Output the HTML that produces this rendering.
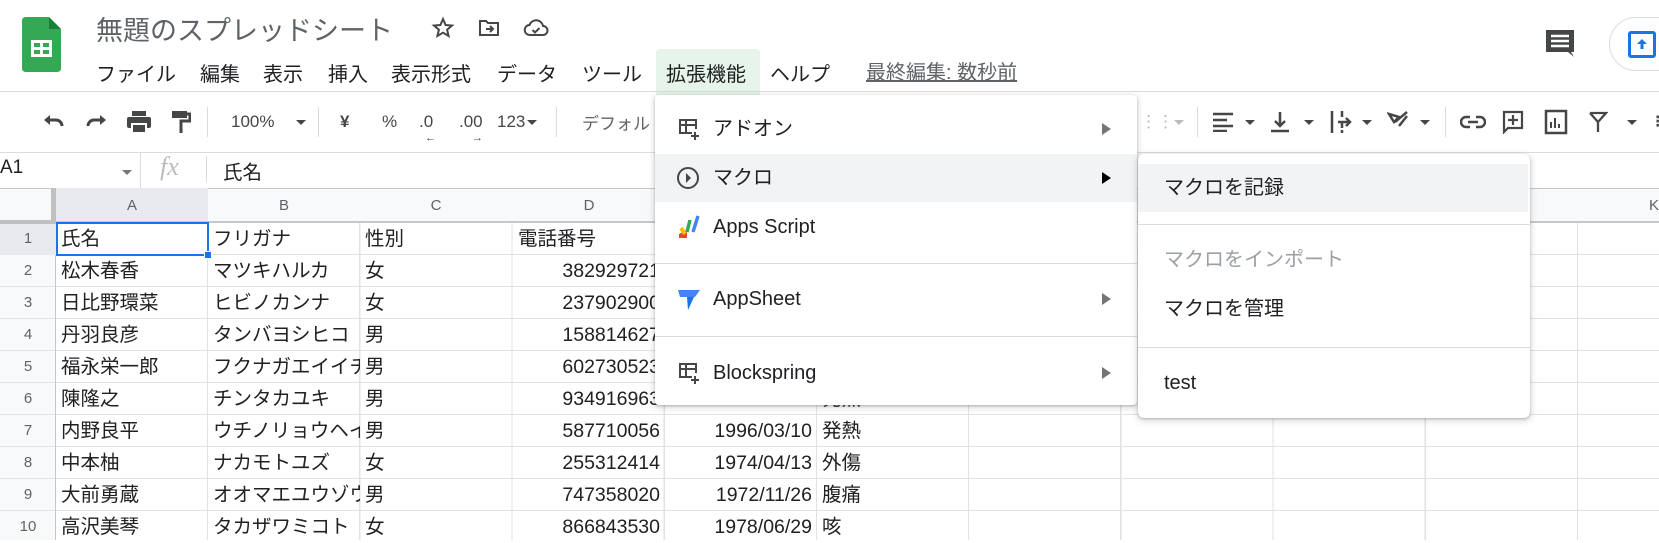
<!DOCTYPE html>
<html><head><meta charset="utf-8">
<style>
*{box-sizing:border-box;margin:0;padding:0}
body{width:1659px;height:540px;overflow:hidden;background:#fff;font-family:"Liberation Sans","Noto Sans CJK JP",sans-serif;color:#202124;position:relative}
.a{position:absolute;white-space:nowrap}
.menu{font-size:20px;color:#202124}
.tb{position:absolute;top:122px;transform:translateY(-50%);color:#444746;font-size:17px}
.cell{position:absolute;height:32px;line-height:32px;font-size:19.5px;overflow:hidden;white-space:nowrap;padding:0 5px}
.rn{position:absolute;left:0;width:56px;height:32px;line-height:32px;text-align:center;font-size:15px;color:#5f6368}
.ch{position:absolute;top:188px;height:35px;line-height:35px;text-align:center;font-size:15px;color:#5f6368;width:152px}
.mi{position:absolute;font-size:20px;color:#202124;line-height:24px}
.arr{position:absolute;width:0;height:0;border-top:6px solid transparent;border-bottom:6px solid transparent;border-left:9px solid #757575}
.dd{display:inline-block;width:0;height:0;border-left:5px solid transparent;border-right:5px solid transparent;border-top:5px solid #444746;vertical-align:middle}
</style></head><body>

<!-- logo -->
<svg class="a" style="left:22px;top:17px" width="39" height="55" viewBox="0 0 39 55">
<path d="M4 0H27L39 12V51Q39 55 35 55H4Q0 55 0 51V4Q0 0 4 0Z" fill="#34a853"/>
<path d="M27 0V12H39Z" fill="#188038"/>
<rect x="9" y="23" width="21" height="17" fill="#fff"/>
<rect x="12" y="26" width="6" height="4" fill="#34a853"/><rect x="21" y="26" width="6" height="4" fill="#34a853"/>
<rect x="12" y="33" width="6" height="4" fill="#34a853"/><rect x="21" y="33" width="6" height="4" fill="#34a853"/>
</svg>
<div class="a" style="left:96px;top:9px;font-size:27px;color:#5f6368">無題のスプレッドシート</div>
<svg class="a" style="left:431px;top:16px" width="24" height="24" viewBox="0 0 24 24"><path d="M12 3l2.6 6 6.4.5-4.9 4.2 1.5 6.3L12 16.7 6.4 20l1.5-6.3L3 9.5l6.4-.5z" fill="none" stroke="#444746" stroke-width="2"/></svg>
<svg class="a" style="left:477px;top:16px" width="24" height="24" viewBox="0 0 24 24"><path d="M3 5h6l2 2h10v12H3z" fill="none" stroke="#444746" stroke-width="2"/><path d="M9 13h6M13 10l3 3-3 3" fill="none" stroke="#444746" stroke-width="2"/></svg>
<svg class="a" style="left:523px;top:16px" width="26" height="24" viewBox="0 0 26 24"><path d="M7 19a5 5 0 0 1-.5-10A7 7 0 0 1 20 10a4.5 4.5 0 0 1 0 9z" fill="none" stroke="#444746" stroke-width="2"/><path d="M9.5 14l2.5 2.5 4.5-4.5" fill="none" stroke="#444746" stroke-width="2"/></svg>

<div class="a" style="left:656px;top:49px;width:104px;height:46px;background:#e6f4ea;border-radius:4px 4px 0 0"></div>
<div class="a menu" style="left:96px;top:58px">ファイル</div>
<div class="a menu" style="left:200px;top:58px">編集</div>
<div class="a menu" style="left:263px;top:58px">表示</div>
<div class="a menu" style="left:328px;top:58px">挿入</div>
<div class="a menu" style="left:391px;top:58px">表示形式</div>
<div class="a menu" style="left:497px;top:58px">データ</div>
<div class="a menu" style="left:582px;top:58px">ツール</div>
<div class="a menu" style="left:666px;top:58px">拡張機能</div>
<div class="a menu" style="left:770px;top:58px">ヘルプ</div>
<div class="a menu" style="left:866px;top:56px;color:#5f6368;text-decoration:underline">最終編集: 数秒前</div>

<svg class="a" style="left:1543px;top:28px" width="34" height="32" viewBox="0 0 34 32"><path d="M3 2h28v22h-3l3 5-6-5H3z" fill="#444746"/><path d="M8 8h18M8 13h18M8 18h18" stroke="#fff" stroke-width="2.5"/></svg>
<div class="a" style="left:1609px;top:17px;width:80px;height:54px;border:1px solid #dadce0;border-radius:27px"></div>
<div class="a" style="left:1628px;top:31px;width:28px;height:27px;border:3px solid #1a73e8;border-radius:3px"></div>
<svg class="a" style="left:1634px;top:36px" width="16" height="16" viewBox="0 0 16 16"><path d="M8 3l5 5H9.5v5h-3V8H3z" fill="#1a73e8"/></svg>

<div class="a" style="left:0;top:91px;width:1659px;height:1px;background:#dadce0"></div>

<!-- toolbar -->
<svg class="a" style="left:42px;top:112px" width="24" height="20" viewBox="0 0 24 20"><path d="M5 8h9a6 6 0 0 1 6 6" fill="none" stroke="#444746" stroke-width="3"/><path d="M2 8l6-5v10z" fill="#444746"/></svg>
<svg class="a" style="left:84px;top:112px" width="24" height="20" viewBox="0 0 24 20"><path d="M19 8h-9a6 6 0 0 0-6 6" fill="none" stroke="#444746" stroke-width="3"/><path d="M22 8l-6-5v10z" fill="#444746"/></svg>
<svg class="a" style="left:126px;top:110px" width="26" height="24" viewBox="0 0 26 24"><rect x="6" y="1" width="14" height="5" fill="#444746"/><rect x="1" y="7" width="24" height="11" rx="2" fill="#444746"/><rect x="6" y="14" width="14" height="9" fill="#444746" stroke="#fff" stroke-width="2"/></svg>
<svg class="a" style="left:171px;top:110px" width="20" height="24" viewBox="0 0 20 24"><rect x="1" y="1" width="15" height="7" fill="#444746"/><path d="M16 4h3v7H10v12" fill="none" stroke="#444746" stroke-width="3"/></svg>
<div class="a" style="left:207px;top:107px;width:1px;height:30px;background:#dadce0"></div>
<div class="tb" style="left:231px">100%</div>
<div class="tb" style="left:296px"><span class="dd"></span></div>
<div class="a" style="left:318px;top:107px;width:1px;height:30px;background:#dadce0"></div>
<div class="tb" style="left:340px;font-weight:bold">¥</div>
<div class="tb" style="left:382px">%</div>
<div class="tb" style="left:419px">.0</div>
<div class="a" style="left:425px;top:132px;font-size:11px;color:#444746">←</div>
<div class="tb" style="left:459px">.00</div>
<div class="a" style="left:472px;top:132px;font-size:11px;color:#444746">→</div>
<div class="tb" style="left:497px">123<span class="dd" style="margin-left:2px"></span></div>
<div class="a" style="left:556px;top:107px;width:1px;height:30px;background:#dadce0"></div>
<div class="tb" style="left:582px;color:#5f6368">デフォルト</div>

<div class="tb" style="left:1140px;color:#bbb">⋮⋮</div>
<div class="tb" style="left:1174px"><span class="dd" style="border-top-color:#bbb"></span></div>
<div class="a" style="left:1197px;top:107px;width:1px;height:30px;background:#dadce0"></div>
<svg class="a" style="left:1212px;top:112px" width="22" height="20" viewBox="0 0 22 20"><path d="M1 2h20M1 8h14M1 14h20M1 19h14" stroke="#444746" stroke-width="2.5"/></svg>
<div class="tb" style="left:1245px"><span class="dd"></span></div>
<svg class="a" style="left:1270px;top:111px" width="20" height="22" viewBox="0 0 20 22"><path d="M10 1v14M5 10l5 5 5-5M1 20h18" fill="none" stroke="#444746" stroke-width="2.5"/></svg>
<div class="tb" style="left:1304px"><span class="dd"></span></div>
<svg class="a" style="left:1330px;top:110px" width="26" height="24" viewBox="0 0 26 24"><path d="M2 1v22M12 1v6M12 12v6M12 20v3M8 12h12M16 8l4 4-4 4" fill="none" stroke="#444746" stroke-width="2.5"/></svg>
<div class="tb" style="left:1362px"><span class="dd"></span></div>
<svg class="a" style="left:1387px;top:110px" width="26" height="24" viewBox="0 0 26 24"><path d="M2 4l10 3-5 5zM8 12l12-10M12 16l8-10" fill="none" stroke="#444746" stroke-width="2.5"/></svg>
<div class="tb" style="left:1420px"><span class="dd"></span></div>
<div class="a" style="left:1445px;top:107px;width:1px;height:30px;background:#dadce0"></div>
<svg class="a" style="left:1460px;top:114px" width="26" height="16" viewBox="0 0 26 16"><path d="M10 3H6a5 5 0 0 0 0 10h4M16 3h4a5 5 0 0 1 0 10h-4M8 8h10" fill="none" stroke="#444746" stroke-width="2.5"/></svg>
<svg class="a" style="left:1502px;top:110px" width="22" height="24" viewBox="0 0 22 24"><path d="M2 2h18v16H6l-4 4z" fill="none" stroke="#444746" stroke-width="2.2"/><path d="M11 5v10M6 10h10" stroke="#444746" stroke-width="2.2"/></svg>
<svg class="a" style="left:1544px;top:109px" width="24" height="26" viewBox="0 0 24 26"><rect x="2" y="2" width="20" height="22" fill="none" stroke="#444746" stroke-width="2.5"/><path d="M7 19v-6M11 19v-10M15 19v-4" stroke="#444746" stroke-width="2"/></svg>
<svg class="a" style="left:1588px;top:110px" width="20" height="24" viewBox="0 0 20 24"><path d="M2 3h16l-8 9v10M2 3l8 9" fill="none" stroke="#444746" stroke-width="2.3"/></svg>
<div class="tb" style="left:1627px"><span class="dd"></span></div>
<div class="tb" style="left:1655px;font-weight:bold">⁝</div>

<div class="a" style="left:0;top:152px;width:1659px;height:1px;background:#dadce0"></div>
<!-- formula bar -->
<div class="a" style="left:0;top:157px;font-size:19px">A1</div>
<div class="a" style="left:122px;top:164px"><span class="dd" style="border-top-color:#777"></span></div>
<div class="a" style="left:140px;top:152px;width:1px;height:36px;background:#dadce0"></div>
<div class="a" style="left:160px;top:152px;font-size:26px;font-style:italic;color:#bbb;font-family:'Liberation Serif',serif">fx</div>
<div class="a" style="left:206px;top:156px;width:1px;height:26px;background:#dadce0"></div>
<div class="a" style="left:223px;top:156px;font-size:19.5px">氏名</div>

<!-- grid -->
<div class="a" style="left:0;top:188px;width:1659px;height:352px;
background:
repeating-linear-gradient(to right,transparent 0,transparent 151px,#e2e2e2 151px,#e2e2e2 152.2px) 56px 0/1603px 100% no-repeat,
repeating-linear-gradient(to bottom,transparent 0,transparent 31px,#e2e2e2 31px,#e2e2e2 32px) 0 35px/100% 320px no-repeat;"></div>
<div class="a" style="left:0;top:188px;width:1659px;height:35px;background:#f8f9fa;border-top:1px solid #c7c7c7;border-bottom:1px solid #c7c7c7"></div>
<div class="a" style="left:0;top:223px;width:56px;height:317px;background:#f8f9fa;border-right:1px solid #c7c7c7;
background-image:repeating-linear-gradient(to bottom,transparent 0,transparent 31px,#e2e2e2 31px,#e2e2e2 32px)"></div>
<div class="a" style="left:56px;top:188px;width:152px;height:35px;background:#e8eaed"></div>
<div class="a" style="left:0;top:223px;width:56px;height:32px;background:#e8eaed"></div>
<div class="a" style="left:51px;top:188px;width:5px;height:35px;background:#c0c0c0"></div>
<div class="a" style="left:0;top:220px;width:56px;height:4px;background:#c0c0c0"></div>
<div class="a" style="left:56px;top:221px;width:1603px;height:2px;background:#c7c7c7"></div>

<div class="ch" style="left:56px">A</div>
<div class="ch" style="left:208px">B</div>
<div class="ch" style="left:360px">C</div>
<div class="ch" style="left:513px">D</div>
<div class="ch" style="left:665px">E</div>
<div class="ch" style="left:817px">F</div>
<div class="ch" style="left:969px">G</div>
<div class="ch" style="left:1121px">H</div>
<div class="ch" style="left:1274px">I</div>
<div class="ch" style="left:1426px">J</div>
<div class="ch" style="left:1578px">K</div>

<div class="rn" style="top:223px">1</div><div class="rn" style="top:255px">2</div><div class="rn" style="top:287px">3</div><div class="rn" style="top:319px">4</div><div class="rn" style="top:351px">5</div><div class="rn" style="top:383px">6</div><div class="rn" style="top:415px">7</div><div class="rn" style="top:447px">8</div><div class="rn" style="top:479px">9</div><div class="rn" style="top:511px">10</div>

<!-- cells -->
<div class="cell" style="left:56px;top:223px;width:152px">氏名</div>
<div class="cell" style="left:208px;top:223px;width:152px">フリガナ</div>
<div class="cell" style="left:360px;top:223px;width:152px">性別</div>
<div class="cell" style="left:513px;top:223px;width:152px">電話番号</div>

<div class="cell" style="left:56px;top:255px;width:152px">松木春香</div><div class="cell" style="left:208px;top:255px;width:152px">マツキハルカ</div><div class="cell" style="left:360px;top:255px;width:152px">女</div><div class="cell" style="left:513px;top:255px;width:152px;text-align:right">382929721</div>
<div class="cell" style="left:56px;top:287px;width:152px">日比野環菜</div><div class="cell" style="left:208px;top:287px;width:152px">ヒビノカンナ</div><div class="cell" style="left:360px;top:287px;width:152px">女</div><div class="cell" style="left:513px;top:287px;width:152px;text-align:right">237902900</div>
<div class="cell" style="left:56px;top:319px;width:152px">丹羽良彦</div><div class="cell" style="left:208px;top:319px;width:152px">タンバヨシヒコ</div><div class="cell" style="left:360px;top:319px;width:152px">男</div><div class="cell" style="left:513px;top:319px;width:152px;text-align:right">158814627</div>
<div class="cell" style="left:56px;top:351px;width:152px">福永栄一郎</div><div class="cell" style="left:208px;top:351px;width:152px;padding-right:0">フクナガエイイチロウ</div><div class="cell" style="left:360px;top:351px;width:152px">男</div><div class="cell" style="left:513px;top:351px;width:152px;text-align:right">602730523</div>
<div class="cell" style="left:56px;top:383px;width:152px">陳隆之</div><div class="cell" style="left:208px;top:383px;width:152px">チンタカユキ</div><div class="cell" style="left:360px;top:383px;width:152px">男</div><div class="cell" style="left:513px;top:383px;width:152px;text-align:right">934916963</div><div class="cell" style="left:665px;top:383px;width:152px;text-align:right">1988/05/16</div><div class="cell" style="left:817px;top:383px;width:152px">発熱</div>
<div class="cell" style="left:56px;top:415px;width:152px">内野良平</div><div class="cell" style="left:208px;top:415px;width:152px;padding-right:0">ウチノリョウヘイ</div><div class="cell" style="left:360px;top:415px;width:152px">男</div><div class="cell" style="left:513px;top:415px;width:152px;text-align:right">587710056</div><div class="cell" style="left:665px;top:415px;width:152px;text-align:right">1996/03/10</div><div class="cell" style="left:817px;top:415px;width:152px">発熱</div>
<div class="cell" style="left:56px;top:447px;width:152px">中本柚</div><div class="cell" style="left:208px;top:447px;width:152px">ナカモトユズ</div><div class="cell" style="left:360px;top:447px;width:152px">女</div><div class="cell" style="left:513px;top:447px;width:152px;text-align:right">255312414</div><div class="cell" style="left:665px;top:447px;width:152px;text-align:right">1974/04/13</div><div class="cell" style="left:817px;top:447px;width:152px">外傷</div>
<div class="cell" style="left:56px;top:479px;width:152px">大前勇蔵</div><div class="cell" style="left:208px;top:479px;width:152px;padding-right:0">オオマエユウゾウ</div><div class="cell" style="left:360px;top:479px;width:152px">男</div><div class="cell" style="left:513px;top:479px;width:152px;text-align:right">747358020</div><div class="cell" style="left:665px;top:479px;width:152px;text-align:right">1972/11/26</div><div class="cell" style="left:817px;top:479px;width:152px">腹痛</div>
<div class="cell" style="left:56px;top:511px;width:152px">高沢美琴</div><div class="cell" style="left:208px;top:511px;width:152px">タカザワミコト</div><div class="cell" style="left:360px;top:511px;width:152px">女</div><div class="cell" style="left:513px;top:511px;width:152px;text-align:right">866843530</div><div class="cell" style="left:665px;top:511px;width:152px;text-align:right">1978/06/29</div><div class="cell" style="left:817px;top:511px;width:152px">咳</div>

<!-- selection -->
<div class="a" style="left:56px;top:222px;width:153px;height:34px;border:2px solid #1a73e8"></div>
<div class="a" style="left:204px;top:251px;width:8px;height:8px;background:#1a73e8;border:1px solid #fff"></div>

<!-- extensions menu -->
<div class="a" style="left:655px;top:95px;width:482px;height:310px;background:#fff;border-radius:4px;box-shadow:0 2px 6px 2px rgba(60,64,67,.15),0 1px 2px rgba(60,64,67,.3)"></div>
<div class="a" style="left:655px;top:154px;width:482px;height:48px;background:#f1f3f4"></div>
<svg class="a" style="left:678px;top:118px" width="22" height="24" viewBox="0 0 22 24"><path d="M14 15H2V2h16v9M2 7h16M8 2v13" fill="none" stroke="#444746" stroke-width="2"/><path d="M17 14v8M13 18h8" stroke="#444746" stroke-width="2"/></svg>
<div class="mi" style="left:713px;top:117px">アドオン</div>
<div class="arr" style="left:1102px;top:123px"></div>
<svg class="a" style="left:676px;top:166px" width="24" height="24" viewBox="0 0 24 24"><circle cx="12" cy="12" r="10" fill="none" stroke="#444746" stroke-width="2"/><path d="M10 7l5 5-5 5z" fill="#444746"/></svg>
<div class="mi" style="left:713px;top:166px">マクロ</div>
<div class="arr" style="left:1102px;top:172px;border-left-color:#000"></div>
<svg class="a" style="left:677px;top:214px" width="24" height="26" viewBox="0 0 24 26"><path d="M2 20l8-4v8H2z" fill="#ea4335"/><path d="M4 14l4 6" stroke="#fbbc04" stroke-width="4"/><path d="M10 18l3-12" stroke="#34a853" stroke-width="3.5"/><path d="M16 18l5-16" stroke="#4285f4" stroke-width="3.5"/></svg>
<div class="mi" style="left:713px;top:215px">Apps Script</div>
<div class="a" style="left:655px;top:263px;width:482px;height:1px;background:#dadce0"></div>
<svg class="a" style="left:677px;top:288px" width="24" height="24" viewBox="0 0 24 24"><path d="M1 2h22l-5 7H3z" fill="#4285f4"/><path d="M10 9h7l-6 13z" fill="#1a73e8"/></svg>
<div class="mi" style="left:713px;top:287px">AppSheet</div>
<div class="arr" style="left:1102px;top:293px"></div>
<div class="a" style="left:655px;top:336px;width:482px;height:1px;background:#dadce0"></div>
<svg class="a" style="left:678px;top:362px" width="22" height="24" viewBox="0 0 22 24"><path d="M14 15H2V2h16v9M2 7h16M8 2v13" fill="none" stroke="#444746" stroke-width="2"/><path d="M17 14v8M13 18h8" stroke="#444746" stroke-width="2"/></svg>
<div class="mi" style="left:713px;top:361px">Blockspring</div>
<div class="arr" style="left:1102px;top:367px"></div>

<!-- macro submenu -->
<div class="a" style="left:1138px;top:154px;width:392px;height:264px;background:#fff;border-radius:6px;box-shadow:0 2px 6px 2px rgba(60,64,67,.15),0 1px 2px rgba(60,64,67,.3)"></div>
<div class="a" style="left:1138px;top:164px;width:390px;height:48px;background:#f1f3f4"></div>
<div class="mi" style="left:1164px;top:176px">マクロを記録</div>
<div class="a" style="left:1138px;top:224px;width:392px;height:1px;background:#dadce0"></div>
<div class="mi" style="left:1164px;top:248px;color:#9aa0a6">マクロをインポート</div>
<div class="mi" style="left:1164px;top:297px">マクロを管理</div>
<div class="a" style="left:1138px;top:347px;width:392px;height:1px;background:#dadce0"></div>
<div class="mi" style="left:1164px;top:371px">test</div>

</body></html>
